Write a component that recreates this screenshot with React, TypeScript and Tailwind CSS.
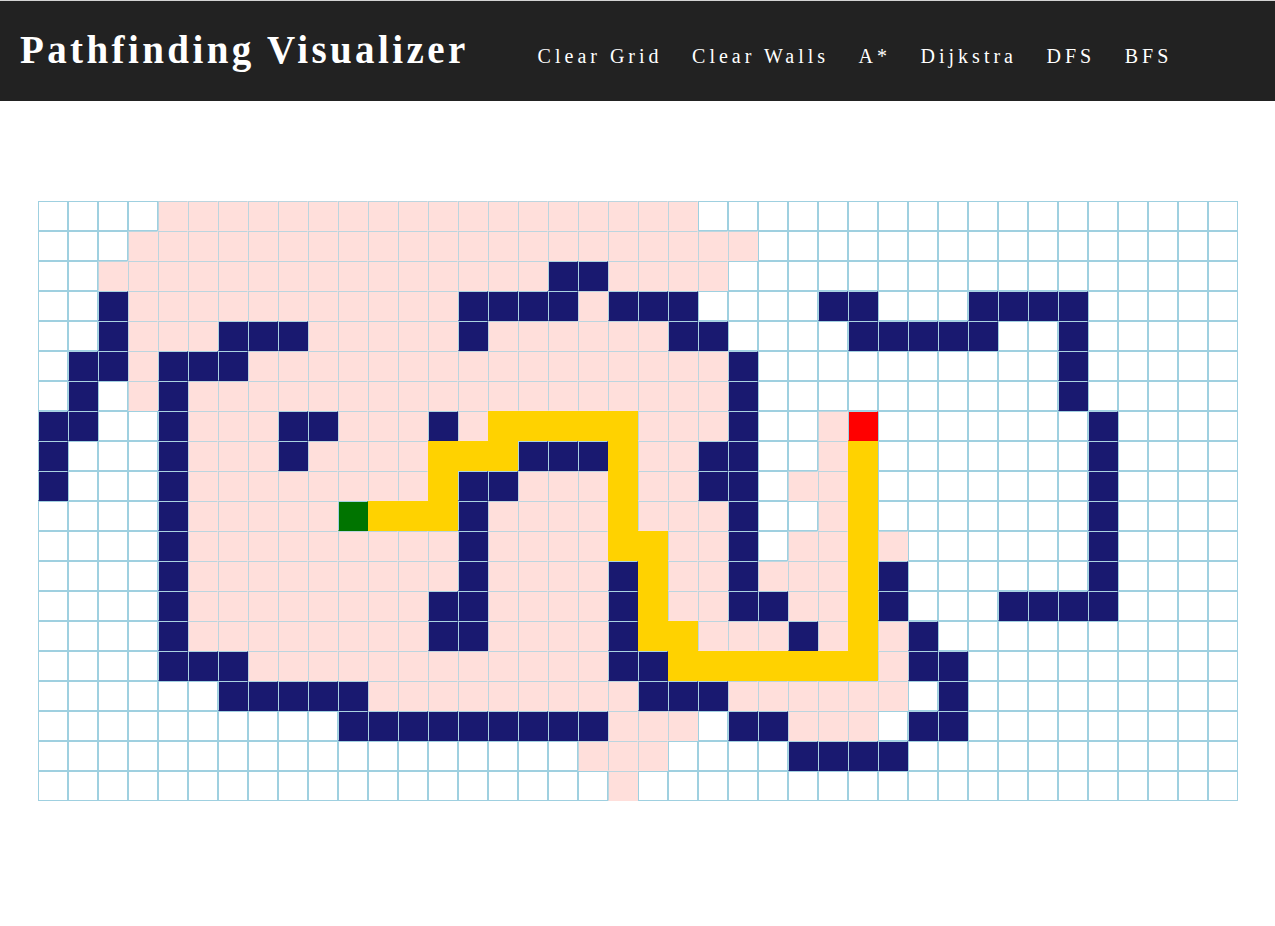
import { Fragment } from 'react'

type Cell = '.' | 'p' | 'w' | 'y' | 's' | 'e'
type Span = [Cell, number, number?]

const ROWS = 20
const COLS = 40

// each row lists the runs that are not empty
const rowSpans: Span[][] = [
  [['p', 4, 21]],
  [['p', 3, 23]],
  [['p', 2, 22], ['w', 17, 18]],
  [['w', 2], ['p', 3, 13], ['w', 14, 17], ['p', 18], ['w', 19, 21], ['w', 26, 27], ['w', 31, 34]],
  [['w', 2], ['p', 3, 5], ['w', 6, 8], ['p', 9, 13], ['w', 14], ['p', 15, 20], ['w', 21, 22], ['w', 27, 31], ['w', 34]],
  [['w', 1, 2], ['p', 3], ['w', 4, 6], ['p', 7, 22], ['w', 23], ['w', 34]],
  [['w', 1], ['p', 3], ['w', 4], ['p', 5, 22], ['w', 23], ['w', 34]],
  [['w', 0, 1], ['w', 4], ['p', 5, 7], ['w', 8, 9], ['p', 10, 12], ['w', 13], ['p', 14], ['y', 15, 19], ['p', 20, 22], ['w', 23], ['p', 26], ['e', 27], ['w', 35]],
  [['w', 0], ['w', 4], ['p', 5, 7], ['w', 8], ['p', 9, 12], ['y', 13, 15], ['w', 16, 18], ['y', 19], ['p', 20, 21], ['w', 22, 23], ['p', 26], ['y', 27], ['w', 35]],
  [['w', 0], ['w', 4], ['p', 5, 12], ['y', 13], ['w', 14, 15], ['p', 16, 18], ['y', 19], ['p', 20, 21], ['w', 22, 23], ['p', 25, 26], ['y', 27], ['w', 35]],
  [['w', 4], ['p', 5, 9], ['s', 10], ['y', 11, 13], ['w', 14], ['p', 15, 18], ['y', 19], ['p', 20, 22], ['w', 23], ['p', 26], ['y', 27], ['w', 35]],
  [['w', 4], ['p', 5, 13], ['w', 14], ['p', 15, 18], ['y', 19, 20], ['p', 21, 22], ['w', 23], ['p', 25, 26], ['y', 27], ['p', 28], ['w', 35]],
  [['w', 4], ['p', 5, 13], ['w', 14], ['p', 15, 18], ['w', 19], ['y', 20], ['p', 21, 22], ['w', 23], ['p', 24, 26], ['y', 27], ['w', 28], ['w', 35]],
  [['w', 4], ['p', 5, 12], ['w', 13, 14], ['p', 15, 18], ['w', 19], ['y', 20], ['p', 21, 22], ['w', 23, 24], ['p', 25, 26], ['y', 27], ['w', 28], ['w', 32, 35]],
  [['w', 4], ['p', 5, 12], ['w', 13, 14], ['p', 15, 18], ['w', 19], ['y', 20, 21], ['p', 22, 24], ['w', 25], ['p', 26], ['y', 27], ['p', 28], ['w', 29]],
  [['w', 4, 6], ['p', 7, 18], ['w', 19, 20], ['y', 21, 27], ['p', 28], ['w', 29, 30]],
  [['w', 6, 10], ['p', 11, 19], ['w', 20, 22], ['p', 23, 28], ['w', 30]],
  [['w', 10, 18], ['p', 19, 21], ['w', 23, 24], ['p', 25, 27], ['w', 29, 30]],
  [['p', 18, 20], ['w', 25, 28]],
  [['p', 19]]
]

const buildGrid = (): Cell[][] =>
  rowSpans.map((spans) => {
    const row: Cell[] = Array(COLS).fill('.')
    spans.forEach(([type, from, to]) => {
      for (let c = from; c <= (to ?? from); c++) row[c] = type
    })
    return row
  })

const cellClass: Record<Cell, string> = {
  '.': 'bg-white border border-[#9fd0e0]',
  p: 'bg-[#ffdfdb] border border-[#ffdfdb] border-t-[#bcd5df] border-l-[#bcd5df]',
  w: 'bg-[#191970] border border-[#191970] border-t-[#a9d3e2] border-l-[#a9d3e2]',
  y: 'bg-[#ffd200] border border-[#ffd200]',
  s: 'bg-[#007400] border border-[#007400] border-t-[#a3d3e2] border-l-[#a3d3e2]',
  e: 'bg-[#ff0000] border border-[#ff0000] border-t-[#a3d3e2] border-l-[#a3d3e2]'
}

const links = ['Clear Grid', 'Clear Walls', 'A*', 'Dijkstra', 'DFS', 'BFS']

const Navbar = () => (
  <header className="h-[101px] border-t border-[#d4d4d4] bg-[#222222] pt-[29px] pl-5">
    <div className="flex items-baseline font-['Liberation_Serif','Times_New_Roman',serif] text-white">
      <h1 className="text-[39px] font-bold leading-none tracking-[3.4px]">
        Pathfinding Visualizer
      </h1>
      <nav className="ml-[69px] flex items-baseline gap-[29.5px]">
        {links.map((l) => (
          <a key={l} href="#" className="text-[20px] leading-none tracking-[4px]">
            {l}
          </a>
        ))}
      </nav>
    </div>
  </header>
)

const Grid = () => {
  const grid = buildGrid()
  return (
    <div
      className="mx-auto mt-[100px] grid w-[1200px] grid-cols-[repeat(40,30px)]"
      style={{ gridTemplateRows: `repeat(${ROWS}, 30px)` }}
    >
      {grid.map((row, r) => (
        <Fragment key={r}>
          {row.map((cell, c) => (
            <div key={`${r}-${c}`} className={`h-[30px] w-[30px] ${cellClass[cell]}`} />
          ))}
        </Fragment>
      ))}
    </div>
  )
}

export default function App() {
  return (
    <div className="min-h-[926px] bg-white">
      <Navbar />
      <Grid />
    </div>
  )
}
